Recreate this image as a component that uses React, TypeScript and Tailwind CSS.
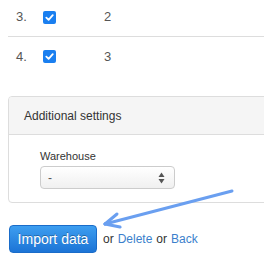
import React from 'react';

const rows = [
  { n: '3.', v: '2' },
  { n: '4.', v: '3' },
];

function Check() {
  return (
    <div className="w-[13px] h-[13px] rounded-[2px] bg-[#1a7ff0] flex items-center justify-center">
      <svg width="9" height="9" viewBox="0 0 10 10">
        <path d="M1.5 5.2 L4 7.6 L8.6 2.4" fill="none" stroke="#fff" strokeWidth="2" strokeLinecap="round" strokeLinejoin="round" />
      </svg>
    </div>
  );
}

export default function App() {
  return (
    <div
      className="relative w-[264px] h-[261px] overflow-hidden bg-white text-[#333]"
      style={{ fontFamily: '"Liberation Sans", Arial, sans-serif' }}
    >
      {/* table rows */}
      <div className="pl-2 -mt-[2px]">
        {rows.map((r, i) => (
          <div
            key={r.n}
            className={`flex items-center h-[39px] text-[13px] text-[#555] ${i === 0 ? 'border-b border-[#ddd]' : ''}`}
          >
            <span className="w-[35px] pl-2">{r.n}</span>
            <span className="w-[61px]">
              <Check />
            </span>
            <span>{r.v}</span>
          </div>
        ))}
      </div>

      {/* additional settings panel */}
      <div className="ml-2 mt-[20px] w-[300px] border border-[#ddd] rounded-[4px] overflow-hidden">
        <div className="h-[38px] bg-[#f5f5f5] border-b border-[#ddd] flex items-center pl-[15px] text-[12px] text-[#333]">
          Additional settings
        </div>
        <div className="pt-[15px] pb-[13px] pl-[31px]">
          <div className="text-[11px] leading-[13px] text-[#333] mb-[3px]">Warehouse</div>
          <div className="w-[135px] h-[23px] rounded-[4px] border border-[#ccc] bg-gradient-to-b from-white to-[#f0f0f0] flex items-center justify-between pl-[7px] pr-[9px] text-[12px] text-[#555]">
            <span>-</span>
            <svg width="7" height="12" viewBox="0 0 7 12">
              <path d="M3.5 0.5 L6.5 5 L0.5 5 Z" fill="#555" />
              <path d="M3.5 11.5 L6.5 7 L0.5 7 Z" fill="#555" />
            </svg>
          </div>
        </div>
      </div>

      {/* actions */}
      <div className="flex items-center mt-[22px] pl-[9px] text-[12px]">
        <button
          className="w-[88px] h-[28px] rounded-[4px] border border-[#1a6cc9] bg-gradient-to-b from-[#3d9ef0] to-[#1c74d6] text-white text-[14px]"
          style={{ textShadow: '0 -1px 0 rgba(0,0,0,0.3)' }}
        >
          Import data
        </button>
        <span className="ml-[6px] text-[#333]">or</span>
        <a className="ml-[4px] text-[#3b7fcc]">Delete</a>
        <span className="ml-[4px] text-[#333]">or</span>
        <a className="ml-[4px] text-[#3b7fcc]">Back</a>
      </div>

      {/* annotation arrow */}
      <svg className="absolute left-0 top-0 pointer-events-none" width="264" height="261">
        <g stroke="#6a9ff0" strokeWidth="3" strokeLinecap="round" fill="none">
          <line x1="232" y1="191" x2="105" y2="224" />
          <line x1="105" y1="224" x2="117" y2="214" />
          <line x1="105" y1="224" x2="120" y2="227" />
        </g>
      </svg>
    </div>
  );
}
